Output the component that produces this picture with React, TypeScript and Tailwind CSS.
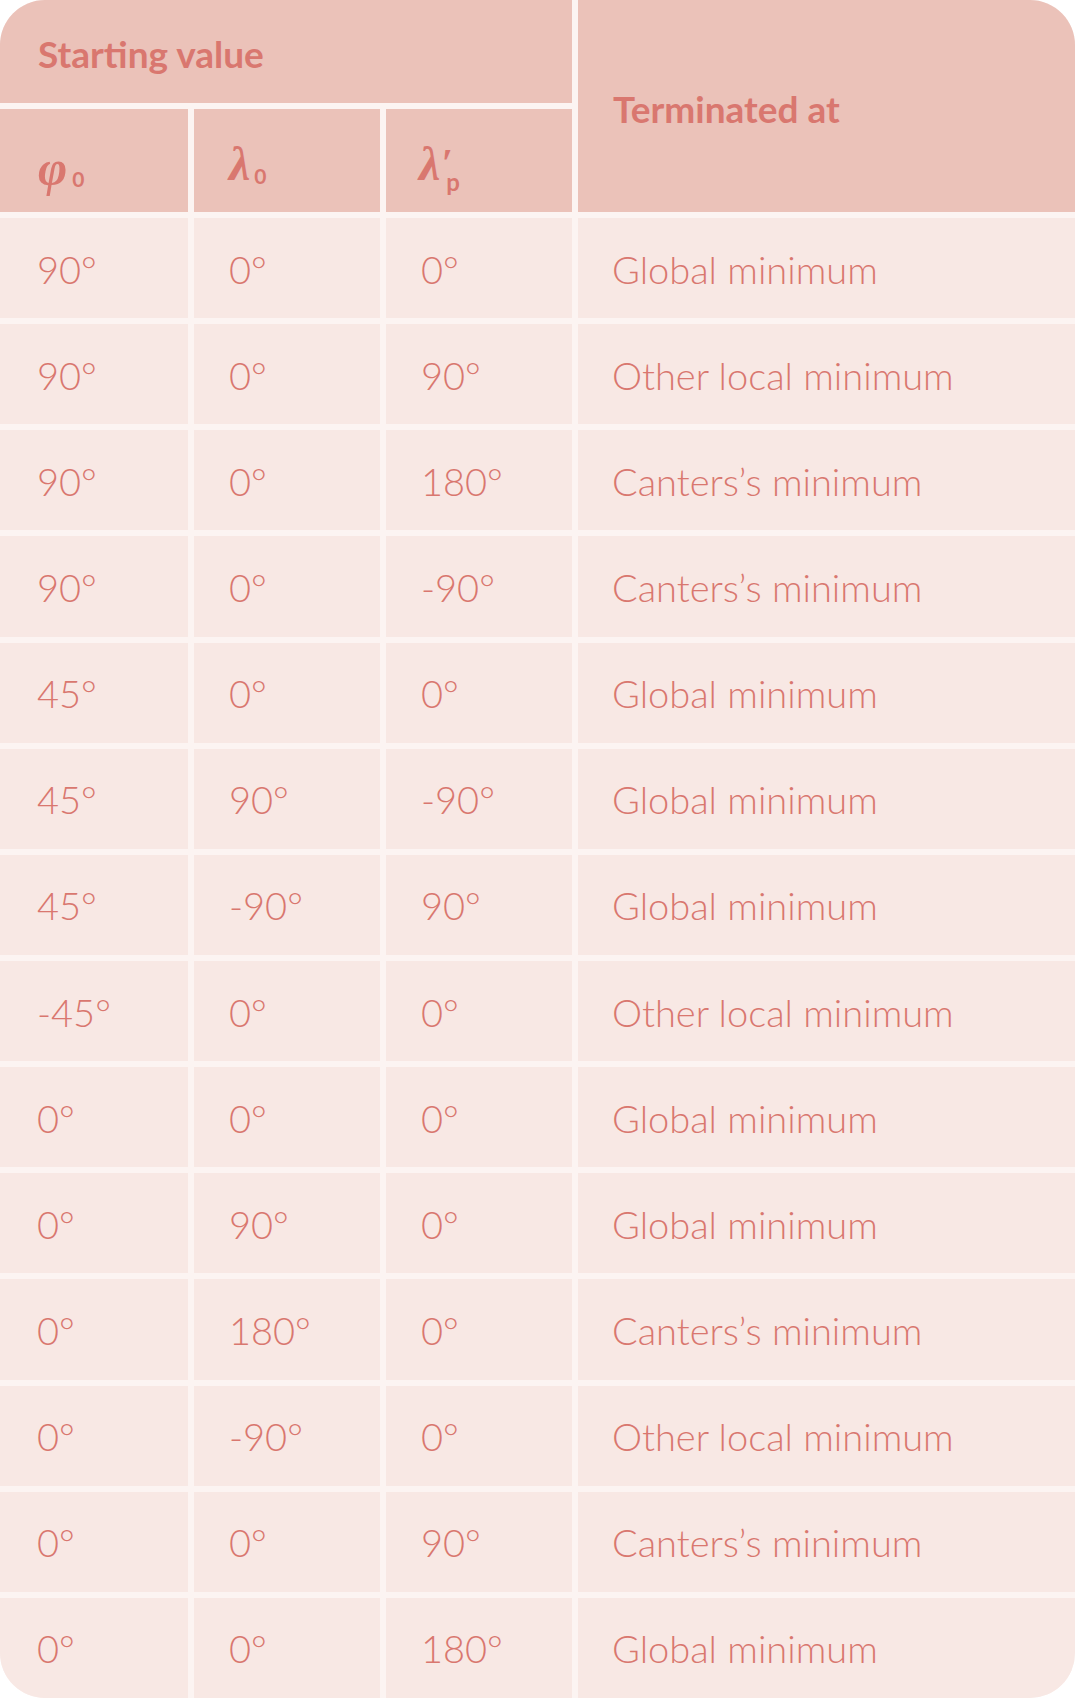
import React from "react";

const rows: [string, string, string, string][] = [
  ["90°", "0°", "0°", "Global minimum"],
  ["90°", "0°", "90°", "Other local minimum"],
  ["90°", "0°", "180°", "Canters’s minimum"],
  ["90°", "0°", "-90°", "Canters’s minimum"],
  ["45°", "0°", "0°", "Global minimum"],
  ["45°", "90°", "-90°", "Global minimum"],
  ["45°", "-90°", "90°", "Global minimum"],
  ["-45°", "0°", "0°", "Other local minimum"],
  ["0°", "0°", "0°", "Global minimum"],
  ["0°", "90°", "0°", "Global minimum"],
  ["0°", "180°", "0°", "Canters’s minimum"],
  ["0°", "-90°", "0°", "Other local minimum"],
  ["0°", "0°", "90°", "Canters’s minimum"],
  ["0°", "0°", "180°", "Global minimum"],
];

const sans = "font-['Lato','Liberation_Sans',sans-serif]";
const serif = "font-['Liberation_Serif',serif]";

export default function App() {
  return (
    <div className="w-full bg-white">
      <div
        className={`grid h-[1698px] w-full grid-cols-[188px_186px_186px_1fr] grid-rows-[103px_103px_repeat(14,1fr)] gap-[6px] overflow-hidden rounded-[45px] bg-[#fcf4f2] text-[#d9776f] ${sans}`}
      >
        {/* Header row 1 */}
        <div className="col-span-3 flex items-center bg-[#ebc2b9] pl-[38px] pt-[5px] text-[37px] font-bold">
          Starting value
        </div>
        <div className="row-span-2 flex items-center bg-[#ebc2b9] pl-[35px] pt-[6px] text-[37px] font-bold">
          Terminated at
        </div>

        {/* Header row 2 */}
        <div className="flex items-center bg-[#ebc2b9] pl-[38px] pt-[14px]">
          <span className={`${serif} text-[50px] font-bold italic leading-none`}>φ</span>
          <span className="ml-[5px] mt-[22px] text-[21px] font-bold leading-none">0</span>
        </div>
        <div className="flex items-center bg-[#ebc2b9] pl-[35px] pt-[6px]">
          <span className={`${serif} text-[48px] font-bold italic leading-none`}>λ</span>
          <span className="ml-[4px] mt-[24px] text-[21px] font-bold leading-none">0</span>
        </div>
        <div className="flex items-center bg-[#ebc2b9] pl-[33px] pt-[6px]">
          <span className={`${serif} text-[48px] font-bold italic leading-none`}>λ</span>
          <span className="ml-[1px] mt-[14px] inline-flex flex-col items-start">
            <span className={`${serif} mt-[4px] h-[18px] text-[40px] font-bold italic leading-[22px]`}>′</span>
            <span className="h-[24px] pl-[5px] text-[24px] font-bold leading-[24px]">p</span>
          </span>
        </div>

        {/* Body */}
        {rows.map((r, i) => (
          <React.Fragment key={i}>
            {r.map((c, j) => (
              <div
                key={j}
                className={`flex items-center bg-[#f8e8e4] pt-[2px] text-[38px] font-light ${
                  j === 0 ? "pl-[37px]" : j === 3 ? "pl-[34px]" : "pl-[35px]"
                }`}
              >
                {c}
              </div>
            ))}
          </React.Fragment>
        ))}
      </div>
    </div>
  );
}
